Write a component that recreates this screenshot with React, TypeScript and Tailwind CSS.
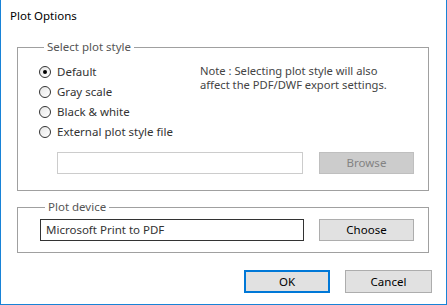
import React from "react";

function Radio({ label, checked }: { label: string; checked?: boolean }) {
  return (
    <div className="flex h-[20px] items-center gap-[6px]">
      <span className="flex h-[12px] w-[12px] items-center justify-center rounded-full border border-[#333] bg-gradient-to-br from-[#e6e6e6] to-white">
        {checked && <span className="h-[4px] w-[4px] rounded-full bg-black" />}
      </span>
      <span className="whitespace-nowrap text-[11.5px] leading-[14px] text-[#333]">{label}</span>
    </div>
  );
}

export default function App() {
  return (
    <div
      className="h-[305px] w-[447px] border-x border-b border-[#1883d7] bg-white"
      style={{ fontFamily: '"Noto Sans", "Open Sans", sans-serif' }}
    >
      <div className="pl-[9px] pt-[8px] text-[11.5px] leading-[16px] text-black">Plot Options</div>

      <fieldset className="ml-[16px] mt-[16px] w-[412px] border border-[#a0a0a0] pl-[21px] pr-[14px] pb-[16px]">
        <legend className="ml-[5px] px-[3px] text-[11.5px] leading-[14px] text-[#555]">Select plot style</legend>
        <div className="flex pt-[8px]">
          <div className="flex w-[161px] shrink-0 flex-col">
            <Radio label="Default" checked />
            <Radio label="Gray scale" />
            <Radio label="Black & white" />
            <Radio label="External plot style file" />
          </div>
          <div className="whitespace-nowrap pt-[2px] text-[11.2px] leading-[14px] text-[#444]">
            Note : Selecting plot style will also
            <br />
            affect the PDF/DWF export settings.
          </div>
        </div>
        <div className="ml-[18px] mt-[10px] flex items-center gap-[16px]">
          <div className="h-[22px] w-[246px] border border-[#cccccc] bg-white" />
          <div className="flex h-[22px] w-[95px] items-center justify-center border border-[#bfbfbf] bg-[#cccccc] text-[11.5px] text-[#838383]">
            Browse
          </div>
        </div>
      </fieldset>

      <fieldset className="ml-[16px] mt-[9px] w-[412px] border border-[#a0a0a0] pl-[22px] pr-[14px] pt-[5px] pb-[11px]">
        <legend className="ml-[5px] px-[3px] text-[11.5px] leading-[14px] text-[#555]">Plot device</legend>
        <div className="flex items-center gap-[15px]">
          <div className="flex h-[22px] w-[264px] items-center border border-[#333] bg-white pl-[5px] text-[11.5px] text-[#333]">
            Microsoft Print to PDF
          </div>
          <div className="flex h-[22px] w-[95px] items-center justify-center border border-[#adadad] bg-[#e1e1e1] text-[11.5px] text-black">
            Choose
          </div>
        </div>
      </fieldset>

      <div className="mt-[17px] flex justify-end gap-[15px] pr-[14px]">
        <div className="flex h-[23px] w-[86px] items-center justify-center border-2 border-[#0078d7] bg-[#e1e1e1] text-[11.5px] text-black">
          OK
        </div>
        <div className="flex h-[23px] w-[87px] items-center justify-center border border-[#adadad] bg-[#e1e1e1] text-[11.5px] text-black">
          Cancel
        </div>
      </div>
    </div>
  );
}
